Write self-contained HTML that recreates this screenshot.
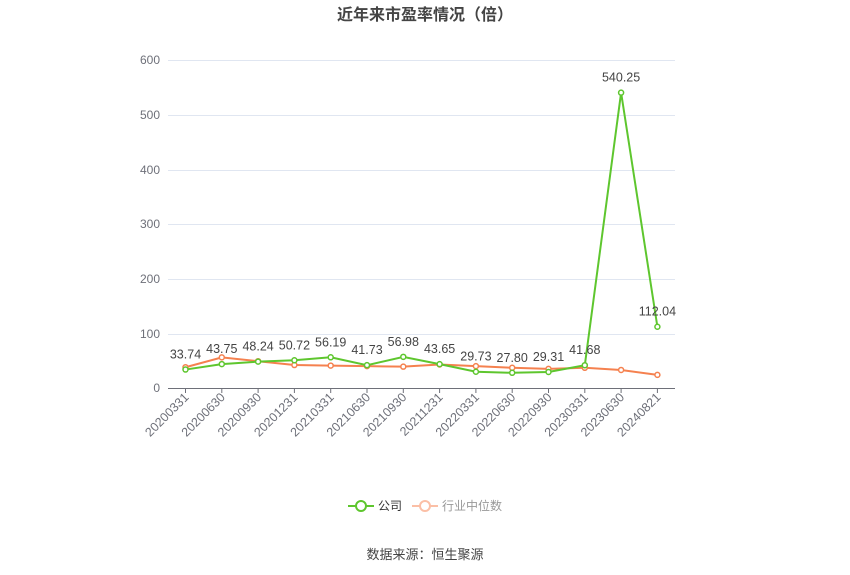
<!DOCTYPE html>
<html><head><meta charset="utf-8"><style>body{margin:0;background:#fff;}svg{display:block;font-family:"Liberation Sans","Noto Sans CJK SC",sans-serif;}</style></head>
<body>
<svg width="850" height="575" viewBox="0 0 850 575">
<text x="425" y="20" text-anchor="middle" font-size="16" font-weight="bold" fill="#444">近年来市盈率情况（倍）</text>
<g stroke="#e0e6f1" stroke-width="1">
<line x1="168" y1="60.5" x2="675" y2="60.5"/><line x1="168" y1="115.5" x2="675" y2="115.5"/><line x1="168" y1="170.5" x2="675" y2="170.5"/><line x1="168" y1="224.5" x2="675" y2="224.5"/><line x1="168" y1="279.5" x2="675" y2="279.5"/><line x1="168" y1="334.5" x2="675" y2="334.5"/>
</g>
<line x1="168" y1="388.5" x2="675" y2="388.5" stroke="#6e7079"/>
<g font-size="12" fill="#6e7079" text-anchor="end">
<text x="160" y="64">600</text><text x="160" y="119">500</text><text x="160" y="174">400</text><text x="160" y="228">300</text><text x="160" y="283">200</text><text x="160" y="338">100</text><text x="160" y="392">0</text>
</g>
<g id="xl" font-size="12.5" fill="#6e7079" text-anchor="end"></g>
<g id="lines"></g>
</svg>
<script>
var d=["20200331","20200630","20200930","20201231","20210331","20210630","20210930","20211231","20220331","20220630","20220930","20230331","20230630","20240821"];
var g=[33.74,43.75,48.24,50.72,56.19,41.73,56.98,43.65,29.73,27.80,29.31,41.68,540.25,112.04];
var ind=[38,56,49,42,41,40,39,43,40,37,35,37,33,24];
function X(i){return 185.5+36.3*i}function Y(v){return 388-v*0.5467}
var s="";
d.forEach(function(t,i){var x=X(i);s+='<line x1="'+x+'" y1="388" x2="'+x+'" y2="393" stroke="#6e7079"/><text transform="translate('+(x+4)+',398) rotate(-45)">'+t+'</text>';});
document.getElementById('xl').innerHTML=s;
function pl(a,c){var p=a.map(function(v,i){return X(i)+','+Y(v)}).join(' ');var o='<polyline points="'+p+'" fill="none" stroke="'+c+'" stroke-width="2"/>';a.forEach(function(v,i){o+='<circle cx="'+X(i)+'" cy="'+Y(v)+'" r="2.5" fill="#fff" stroke="'+c+'" stroke-width="1.5"/>'});return o;}
var L=pl(ind,"#f5814f")+pl(g,"#5ec62e");
g.forEach(function(v,i){L+='<text x="'+X(i)+'" y="'+(Y(v)-11)+'" text-anchor="middle" font-size="12.5" fill="#444">'+v.toFixed(2)+'</text>'});
L+='<line x1="348" y1="506" x2="374" y2="506" stroke="#5ec62e" stroke-width="2"/><circle cx="361" cy="506" r="5" fill="#fff" stroke="#5ec62e" stroke-width="2"/><text x="378" y="510" font-size="12" fill="#333">公司</text>';
L+='<line x1="412" y1="506" x2="438" y2="506" stroke="#fbbfa6" stroke-width="2"/><circle cx="425" cy="506" r="5" fill="#fff" stroke="#fbbfa6" stroke-width="2"/><text x="442" y="510" font-size="12" fill="#999">行业中位数</text>';
L+='<text x="425" y="559" text-anchor="middle" font-size="13" fill="#444">数据来源：恒生聚源</text>';
document.getElementById('lines').innerHTML=L;
</script>
</body></html>
